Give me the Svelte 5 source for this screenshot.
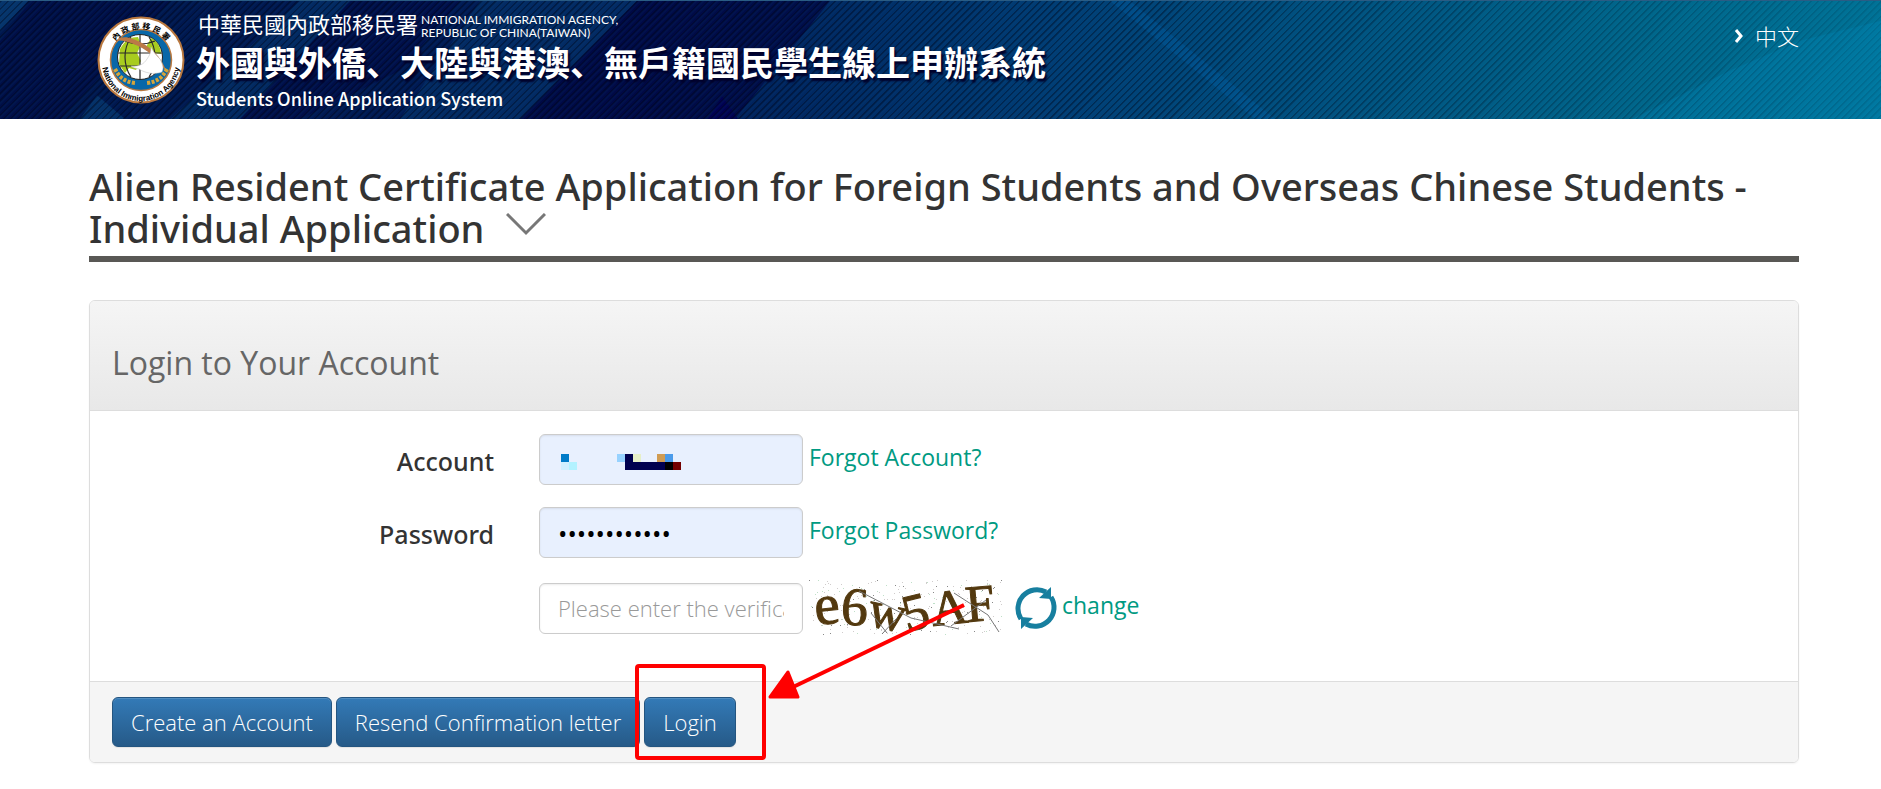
<script lang="ts">
  type Block = { x: number; y: number; w: number; fill: string };

  let account = $state('');
  let password = $state('studentlogin');
  let verification = $state('');

  // pixelated cover over the account name
  const mask: Block[] = [
    { x: 0, y: 0, w: 8, fill: '#007bc8' },
    { x: 0, y: 8, w: 8, fill: '#cfefff' },
    { x: 8, y: 8, w: 8, fill: '#b2f2ff' },
    { x: 56, y: 0, w: 8, fill: '#97d2ff' },
    { x: 64, y: 0, w: 8, fill: '#00004f' },
    { x: 72, y: 0, w: 8, fill: '#e6efc8' },
    { x: 96, y: 0, w: 8, fill: '#d09c53' },
    { x: 104, y: 0, w: 8, fill: '#4b9bea' },
    { x: 64, y: 8, w: 40, fill: '#00004f' },
    { x: 104, y: 8, w: 8, fill: '#000000' },
    { x: 112, y: 8, w: 8, fill: '#730000' }
  ];

  const captcha = [
    { char: 'e', x: 7, y: 45, size: 57, turn: -6 },
    { char: '6', x: 31, y: 44, size: 54, turn: 4 },
    { char: 'w', x: 57, y: 45, size: 52, turn: 12 },
    { char: '5', x: 98, y: 52, size: 52, turn: -14 },
    { char: 'A', x: 124, y: 46, size: 50, turn: -6 },
    { char: 'F', x: 158, y: 42, size: 52, turn: -5 }
  ];

  const specks = Array.from({ length: 260 }, (_, i) => ({
    x: (i * 73 + ((i * i) % 31)) % 193,
    y: (i * 29 + ((i * i * 7) % 17)) % 55,
    fill: i % 5 === 0 ? '#888888' : i % 3 === 0 ? '#bfe0c8' : '#d0cccc'
  }));
</script>

<header class="banner">
  <svg class="facets" viewBox="0 0 1881 119" preserveAspectRatio="none" aria-hidden="true">
    <path d="M0 0H28L0 30z" fill="#0a4a80" opacity="0.6" />
    <path d="M30 0H170L60 119H0V40z" fill="#00033f" opacity="0.4" />
    <path d="M97 95 125 119H80z" fill="#0a4a80" opacity="0.5" />
    <path d="M300 0H350L240 119H170z" fill="#0a4a80" opacity="0.35" />
    <path d="M350 0H460L400 70 300 119H240z" fill="#00033f" opacity="0.5" />
    <path d="M480 0H637L520 119H400z" fill="#0a4a80" opacity="0.35" />
    <path d="M637 0H830L735 119H520z" fill="#00033f" opacity="0.7" />
    <path d="M722 96 738 119H708z" fill="#000050" />
    <path d="M1130 0 1275 119H1255L1110 0z" fill="#0061a8" opacity="0.35" />
    <path d="M1632 119 1730 70 1800 40 1881 20V119z" fill="#0088b8" opacity="0.3" />
  </svg>
  <div class="banner-inner">
    <a class="brand" href="#home">
      <svg class="emblem" viewBox="0 0 88 88" aria-hidden="true">
        <defs>
          <path id="ring-top" d="M12 45a32 32 0 0 1 64 0" />
          <path id="ring-bottom" d="M5 46a39 39 0 0 0 78 0" />
        </defs>
        <circle cx="44" cy="44" r="42.500" fill="#fff" stroke="#b9783f" stroke-width="2" />
        <circle cx="44" cy="44" r="30.500" fill="#0867a8" stroke="#b9783f" stroke-width="1.500" />
        <text class="ring-zh"><textPath href="#ring-top" startOffset="50%">內 政 部 移 民 署</textPath></text>
        <text class="ring-en"><textPath href="#ring-bottom" startOffset="50%">National Immigration Agency</textPath></text>
        <circle cx="43" cy="41" r="22.500" fill="#fff" stroke="#222" />
        <path d="M23 33c5-9 11-12 18-12l3 8-4 8 4 8-5 9-7-2-4 5-6-9zM54 22c6 3 10 9 10 16l-7-1-8-6z" fill="#a8cc1f" />
        <path d="M21 37h44M23 50h40M43 19v44M28 25c9 4 21 4 30 0M34 21c-8 12-8 28 0 40M52 21c8 12 8 28 0 40" fill="none" stroke="#2b2b2b" stroke-width="1.200" />
        <path d="M19 25c3-4 9-5 17-2 17 6 29 18 34 34-9-14-19-24-36-30-8-3-12-3-15-2z" fill="#bb7a47" />
        <path d="M54 31c3 6 5 8 9 12 3 6 4 9 2 13-8 3-17 1-23-3-3-1-6-1-8-3 8 1 13-2 16-7 3-4 4-7 4-12z" fill="#fff" stroke="#bbb" stroke-width="0.500" />
        <path d="M18 53c4 8 10 13 20 14M70 53c-4 8-10 13-20 14" fill="none" stroke="#d6a53a" stroke-width="4" stroke-dasharray="3 1.500" />
      </svg>
      <div class="brand-text">
        <div class="agency">
          <span class="agency-zh">中華民國內政部移民署</span>
          <span class="agency-en">NATIONAL IMMIGRATION AGENCY,<br />REPUBLIC OF CHINA(TAIWAN)</span>
        </div>
        <div class="system-zh">外國與外僑<span class="comma">、</span>大陸與港澳<span class="comma">、</span>無戶籍國民學生線上申辦系統</div>
        <div class="system-en">Students Online Application System</div>
      </div>
    </a>
    <a class="language" href="#zh" lang="zh-Hant">
      <svg viewBox="0 0 10 16" aria-hidden="true"><path d="M2 2 7 8 2 14" /></svg>
      中文
    </a>
  </div>
</header>

<main>
  <h1>
    Alien Resident Certificate Application for Foreign Students and Overseas Chinese Students - Individual Application
    <button class="toggle" type="button" aria-label="Choose application type">
      <svg viewBox="0 0 40 24" aria-hidden="true"><path d="M1 1 20 20 39 1" /></svg>
    </button>
  </h1>

  <form class="panel" onsubmit={(e) => e.preventDefault()}>
    <div class="panel-heading"><h2>Login to Your Account</h2></div>

    <div class="panel-body">
      <div class="row">
        <label for="account">Account</label>
        <div class="field">
          <input id="account" class="filled" type="text" bind:value={account} />
          <svg class="mask" viewBox="0 0 120 16" aria-hidden="true">
            {#each mask as block}
              <rect x={block.x} y={block.y} width={block.w} height="8" fill={block.fill} />
            {/each}
          </svg>
        </div>
        <a class="link" href="#forgot-account">Forgot Account?</a>
      </div>
      <div class="row">
        <label for="password">Password</label>
        <div class="field">
          <input id="password" class="filled" type="password" bind:value={password} />
        </div>
        <a class="link" href="#forgot-password">Forgot Password?</a>
      </div>
      <div class="row">
        <span></span>
        <div class="field">
          <input
            type="text"
            aria-label="Verification code"
            placeholder="Please enter the verification code"
            bind:value={verification}
          />
        </div>
        <div class="verify">
          <svg class="captcha" viewBox="0 0 194 56" role="img" aria-label="Verification image">
            {#each specks as speck}
              <rect x={speck.x} y={speck.y} width="1" height="1" fill={speck.fill} />
            {/each}
            {#each captcha as glyph}
              <text
                x={glyph.x}
                y={glyph.y}
                font-size={glyph.size}
                transform={`rotate(${glyph.turn} ${glyph.x} ${glyph.y})`}>{glyph.char}</text>
            {/each}
            <path d="M50 11 102 38 150 49M88 38l-15 16M142 46l35-26M145 13l34 22 11 17M62 33l16 20" />
          </svg>
          <a class="change" href="#change">
            <svg viewBox="0 0 46 46" aria-hidden="true">
              <path class="arc" d="M8 34A19 19 0 0 1 33 7" />
              <path class="arc" d="M38 12A19 19 0 0 1 13 39" />
              <path d="M38 2v12l-12-1zM8 44V32l12 1z" />
            </svg>
            <span class="link">change</span>
          </a>
        </div>
      </div>
    </div>

    <div class="panel-footer">
      <button class="btn" type="button">Create an Account</button>
      <button class="btn" type="button">Resend Confirmation letter</button>
      <div class="callout">
        <button class="btn" type="submit">Login</button>
        <svg class="marker" viewBox="0 0 334 164" aria-hidden="true">
          <rect x="2" y="66" width="127" height="92" rx="2" />
          <path class="shaft" d="M329 5 156 88" />
          <path class="head" d="M135 97 153 72 163 97z" />
        </svg>
      </div>
    </div>
  </form>
</main>

<style>
  :global(body) {
    margin: 0;
    background: #fff;
    color: #333;
    font-family: 'Open Sans', 'Noto Sans CJK TC', sans-serif;
    font-size: 22px;
    font-weight: 300;
  }

  a {
    color: #009a82;
    text-decoration: none;
  }

  .banner {
    position: relative;
    background: linear-gradient(90deg, #00164c 0%, #001a55 35%, #003c74 55%, #005280 70%, #00688c 87%, #007498 100%);
    border-top: 1px solid #2a5c84;
    overflow: hidden;
  }

  /* diagonal hatching, fading out to the right */
  .banner::before {
    content: '';
    position: absolute;
    inset: 0;
    z-index: 1;
    background: repeating-linear-gradient(135deg, #00081a66 0 1px, #0a4a8022 2px 3px, transparent 4px 5px);
    mask-image: linear-gradient(90deg, #000 60%, #0004);
  }

  .facets {
    position: absolute;
    inset: 0;
    width: 100%;
    height: 100%;
  }

  .banner-inner {
    position: relative;
    z-index: 2;
    display: flex;
    align-items: flex-start;
    justify-content: space-between;
    min-height: 118px;
    padding: 0 82px 0 97px;
  }

  .brand {
    display: flex;
    gap: 11px;
    color: #fff;
    white-space: nowrap;
  }

  .emblem {
    width: 88px;
    height: 88px;
    margin-top: 15px;
  }

  .ring-zh {
    font-size: 8px;
    font-weight: 700;
    text-anchor: middle;
  }

  .ring-en {
    font-family: 'Liberation Sans', sans-serif;
    font-size: 8px;
    font-weight: 700;
    text-anchor: middle;
  }

  .brand-text {
    padding-top: 8px;
    font-family: 'Noto Sans CJK TC', sans-serif;
  }

  .agency {
    display: flex;
    gap: 3px;
    margin-left: 2px;
  }

  .agency-zh {
    font-size: 22px;
    line-height: 28px;
    font-weight: 400;
  }

  .agency-en {
    padding-top: 4px;
    font-family: Lato, sans-serif;
    font-size: 12px;
    line-height: 13px;
    font-weight: 400;
  }

  .system-zh {
    font-size: 34px;
    line-height: 46px;
    font-weight: 700;
    text-shadow: 2px 3px 2px #00002a;
  }

  .comma {
    font-family: 'Noto Sans CJK JP', sans-serif;
  }

  .system-en {
    font-size: 18px;
    line-height: 26px;
    font-weight: 500;
  }

  .language {
    display: flex;
    align-items: center;
    gap: 11px;
    margin-top: 19px;
    color: #fff;
    line-height: 32px;
  }

  .language svg {
    width: 10px;
    height: 16px;
    fill: none;
    stroke: #fff;
    stroke-width: 3;
  }

  main {
    padding: 46px 82px 26px 89px;
  }

  h1 {
    margin: 0;
    padding-bottom: 7px;
    border-bottom: 6px solid #595855;
    font-family: 'Noto Sans', sans-serif;
    font-size: 38px;
    line-height: 42px;
    font-weight: 500;
  }

  .toggle {
    margin-left: 12px;
    padding: 0;
    border: 0;
    background: none;
    vertical-align: 6px;
  }

  .toggle svg {
    display: block;
    width: 40px;
    height: 24px;
    fill: none;
    stroke: #777;
    stroke-width: 3;
  }

  .panel {
    margin-top: 38px;
    border: 1px solid #ddd;
    border-radius: 6px;
    box-shadow: 0 1px 2px #0000000d;
  }

  .panel-heading {
    padding: 40px 22px 26px;
    border-bottom: 1px solid #ddd;
    border-radius: 5px 5px 0 0;
    background: linear-gradient(#f5f5f5, #e8e8e8);
  }

  h2 {
    margin: 0;
    color: #666;
    font-size: 32px;
    line-height: 43px;
    font-weight: 400;
  }

  .panel-body {
    display: grid;
    gap: 22px;
    padding: 23px 0 45px;
  }

  .row {
    display: grid;
    grid-template-columns: 404px 264px 1fr;
    align-items: center;
  }

  label {
    padding-top: 2px;
    font-family: 'Noto Sans', sans-serif;
    font-size: 25px;
    line-height: 36px;
    font-weight: 500;
    text-align: right;
  }

  .field {
    position: relative;
    margin-left: 45px;
    width: 264px;
  }

  input {
    box-sizing: border-box;
    width: 100%;
    height: 51px;
    padding: 8px 18px;
    border: 1px solid #ccc;
    border-radius: 6px;
    box-shadow: inset 0 1px 2px #00000013;
    color: #000;
    font: inherit;
  }

  input[type='password'] {
    font-size: 25px;
    font-weight: 400;
  }

  input::placeholder {
    color: #999;
  }

  .filled {
    background: #e8f0fe;
  }

  .mask {
    position: absolute;
    top: 20px;
    left: 22px;
    width: 120px;
    height: 16px;
  }

  .row > .link,
  .verify {
    margin-left: 51px;
  }

  .link {
    padding-bottom: 6px;
    font-size: 23px;
    font-weight: 400;
  }

  .verify {
    display: flex;
    align-items: center;
    gap: 10px;
  }

  .captcha {
    width: 194px;
    height: 56px;
    overflow: visible;
  }

  .captcha text {
    fill: #53390f;
    font-family: 'Liberation Serif', serif;
    font-weight: 400;
    stroke: #53390f;
  }

  .captcha path {
    fill: none;
    stroke: #777;
  }

  .change {
    display: flex;
    align-items: center;
    gap: 3px;
  }

  .change svg {
    width: 46px;
    height: 46px;
    fill: #177f9f;
  }

  .change .arc {
    fill: none;
    stroke: #177f9f;
    stroke-width: 5;
  }

  .panel-footer {
    display: flex;
    gap: 4px;
    padding: 15px 22px;
    border-top: 1px solid #ddd;
    border-radius: 0 0 5px 5px;
    background: #f5f5f5;
  }

  .btn {
    height: 50px;
    padding: 0 18px;
    border: 1px solid #245580;
    border-radius: 6px;
    background: linear-gradient(#337ab7, #265a88);
    box-shadow:
      inset 0 1px 0 #ffffff26,
      0 1px 1px #00000013;
    color: #fff;
    font: inherit;
    white-space: nowrap;
  }

  .callout {
    position: relative;
  }

  .marker {
    position: absolute;
    left: -9px;
    bottom: -17px;
    width: 334px;
    height: 164px;
    pointer-events: none;
  }

  .marker rect,
  .marker .shaft {
    fill: none;
    stroke: #f00;
    stroke-width: 4;
  }

  .marker .head {
    fill: #f00;
    stroke: #f00;
    stroke-width: 3;
    stroke-linejoin: round;
  }
</style>
